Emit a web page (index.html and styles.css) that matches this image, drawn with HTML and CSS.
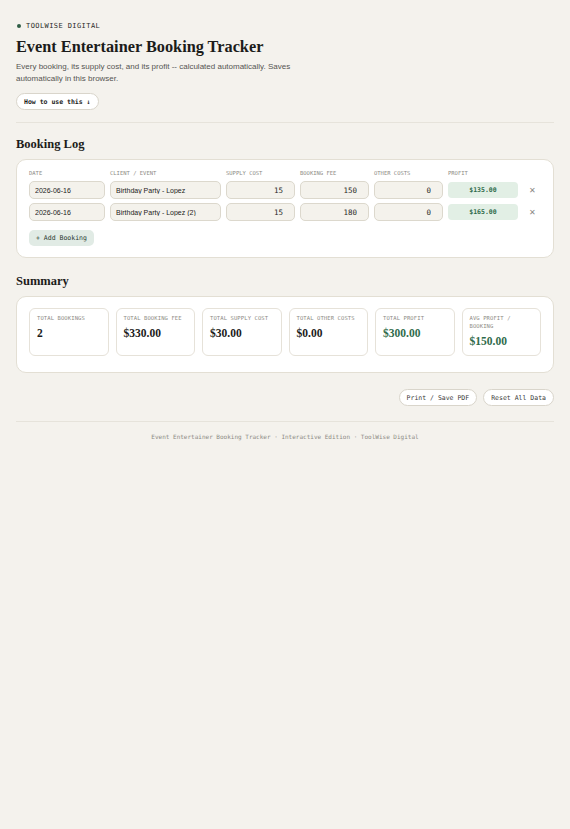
FILE: index.html
```html
<!DOCTYPE html>
<html lang="en">
<head>
<meta charset="UTF-8" />
<meta name="viewport" content="width=device-width, initial-scale=1" />
<title>Event Entertainer Booking Tracker</title>
<link rel="stylesheet" href="styles.css">
</head>
<body>
  <div class="page">
    <header class="intro">
      <div class="eyebrow"><span class="dot"></span>TOOLWISE DIGITAL</div>
      <h1>Event Entertainer Booking Tracker</h1>
      <p class="lead">Every booking, its supply cost, and its profit -- calculated automatically. Saves automatically in this browser.</p>
      <button class="pill pill-strong" type="button">How to use this ↓</button>
    </header>

    <hr class="rule" />

    <section class="block">
      <h2>Booking Log</h2>
      <div class="card">
        <div class="log-grid">
          <div class="col-label">Date</div>
          <div class="col-label">Client / Event</div>
          <div class="col-label">Supply Cost</div>
          <div class="col-label">Booking Fee</div>
          <div class="col-label">Other Costs</div>
          <div class="col-label">Profit</div>
          <div></div>

          <input class="field" type="text" value="2026-06-16" />
          <input class="field" type="text" value="Birthday Party - Lopez" />
          <input class="field num" type="text" value="15" />
          <input class="field num" type="text" value="150" />
          <input class="field num" type="text" value="0" />
          <div class="profit">$135.00</div>
          <button class="remove" type="button" aria-label="Remove">✕</button>

          <input class="field" type="text" value="2026-06-16" />
          <input class="field" type="text" value="Birthday Party - Lopez (2)" />
          <input class="field num" type="text" value="15" />
          <input class="field num" type="text" value="180" />
          <input class="field num" type="text" value="0" />
          <div class="profit">$165.00</div>
          <button class="remove" type="button" aria-label="Remove">✕</button>
        </div>
        <button class="add-btn" type="button">+ Add Booking</button>
      </div>
    </section>

    <section class="block">
      <h2>Summary</h2>
      <div class="card card-summary">
        <div class="stats">
          <div class="stat">
            <div class="stat-label">Total Bookings</div>
            <div class="stat-value">2</div>
          </div>
          <div class="stat">
            <div class="stat-label">Total Booking Fee</div>
            <div class="stat-value">$330.00</div>
          </div>
          <div class="stat">
            <div class="stat-label">Total Supply Cost</div>
            <div class="stat-value">$30.00</div>
          </div>
          <div class="stat">
            <div class="stat-label">Total Other Costs</div>
            <div class="stat-value">$0.00</div>
          </div>
          <div class="stat">
            <div class="stat-label">Total Profit</div>
            <div class="stat-value good">$300.00</div>
          </div>
          <div class="stat">
            <div class="stat-label">Avg Profit / Booking</div>
            <div class="stat-value good">$150.00</div>
          </div>
        </div>
      </div>
    </section>

    <div class="actions">
      <button class="pill" type="button">Print / Save PDF</button>
      <button class="pill" type="button">Reset All Data</button>
    </div>

    <hr class="rule" />

    <footer>Event Entertainer Booking Tracker · Interactive Edition · ToolWise Digital</footer>
  </div>
</body>
</html>
```

FILE: styles.css
```css
/* Base */
* {
  box-sizing: border-box;
}
body {
  margin: 0;
  background: #f4f2ed;
  color: #1c1c1a;
  font-family: "Liberation Sans", Arial, sans-serif;
}
.page {
  width: 538px;
  margin-left: 16px;
  padding: 22px 0 40px;
}

/* Intro */
.eyebrow {
  display: flex;
  align-items: center;
  gap: 5px;
  font-family: "DejaVu Sans Mono", monospace;
  font-size: 7px;
  line-height: 8px;
  letter-spacing: 0.06em;
  color: #2a2a28;
}
.dot {
  width: 4px;
  height: 4px;
  border-radius: 50%;
  background: #2e5e45;
  margin-left: 1px;
}
h1 {
  font-family: "Liberation Serif", "Times New Roman", serif;
  font-size: 16.3px;
  font-weight: 700;
  margin: 7px 0 0;
  line-height: 20px;
}
.lead {
  font-size: 8px;
  line-height: 12px;
  color: #555552;
  margin: 4px 0 0;
  max-width: 285px;
}
.pill {
  font-family: "DejaVu Sans Mono", monospace;
  font-size: 6.5px;
  color: #3a3a38;
  background: #ffffff;
  border: 1px solid #d9d5cb;
  border-radius: 10px;
  padding: 0 7px;
  height: 17px;
  cursor: pointer;
}
.pill-strong {
  font-weight: 700;
  color: #1c1c1a;
  margin-top: 8px;
}
.rule {
  border: 0;
  border-top: 1px solid #e6e3db;
  margin: 12px 0 0;
}

/* Sections */
h2 {
  font-family: "Liberation Serif", "Times New Roman", serif;
  font-size: 12.5px;
  line-height: 14px;
  font-weight: 700;
  margin: 14px 0 8px;
}
.block + .block h2 {
  margin-top: 16px;
  margin-bottom: 8px;
}
.card {
  background: #ffffff;
  border: 1.5px solid #e3dfd4;
  border-radius: 10px;
  padding: 10px 12px 11px;
}
.card-summary {
  padding: 11px 12px 16px;
}

/* Booking log */
.log-grid {
  display: grid;
  grid-template-columns: 76px 111px 69px 69px 69px 70px 1fr;
  column-gap: 5px;
  row-gap: 4px;
  align-items: center;
}
.col-label {
  font-family: "DejaVu Sans Mono", monospace;
  font-size: 5.5px;
  text-transform: uppercase;
  color: #8d8b85;
  line-height: 7px;
}
.field {
  height: 18px;
  width: 100%;
  border: 1px solid #dcd8cd;
  border-radius: 5px;
  background: #f4f2ec;
  font-family: "Liberation Sans", Arial, sans-serif;
  font-size: 7px;
  color: #1c1c1a;
  padding: 0 5px;
}
.field.num {
  font-family: "DejaVu Sans Mono", monospace;
  font-size: 7.5px;
  color: #2a2a28;
  text-align: right;
  padding-right: 11px;
}
.profit {
  height: 16px;
  border-radius: 4px;
  background: #e2efe5;
  color: #2f6b4b;
  font-family: "DejaVu Sans Mono", monospace;
  font-size: 6.5px;
  font-weight: 700;
  display: flex;
  align-items: center;
  justify-content: center;
}
.remove {
  background: none;
  border: 0;
  color: #8a8883;
  font-size: 8px;
  padding: 0;
  cursor: pointer;
}
.add-btn {
  margin-top: 9px;
  font-family: "DejaVu Sans Mono", monospace;
  font-size: 6.5px;
  color: #2a3a32;
  background: #e1ebe5;
  border: 0;
  border-radius: 5px;
  height: 16px;
  padding: 0 7px;
  cursor: pointer;
}

/* Summary */
.stats {
  display: grid;
  grid-template-columns: repeat(6, 1fr);
  gap: 7px;
}
.stat {
  border: 1px solid #e6e2d9;
  border-radius: 6px;
  padding: 5px 7px 7px;
}
.stat-label {
  font-family: "DejaVu Sans Mono", monospace;
  font-size: 5.5px;
  text-transform: uppercase;
  color: #8d8b85;
  line-height: 8px;
  letter-spacing: 0.02em;
}
.stat-value {
  font-family: "Liberation Serif", "Times New Roman", serif;
  font-size: 11.5px;
  line-height: 14px;
  font-weight: 700;
  margin-top: 4px;
  color: #1c1c1a;
}
.stat-value.good {
  color: #2f6b4b;
}

/* Actions and footer */
.actions {
  display: flex;
  justify-content: flex-end;
  gap: 6px;
  margin-top: 16px;
}
.actions + .rule {
  margin-top: 15px;
}
footer {
  text-align: center;
  font-family: "DejaVu Sans Mono", monospace;
  font-size: 6px;
  color: #8d8b85;
  margin-top: 11px;
}
```
